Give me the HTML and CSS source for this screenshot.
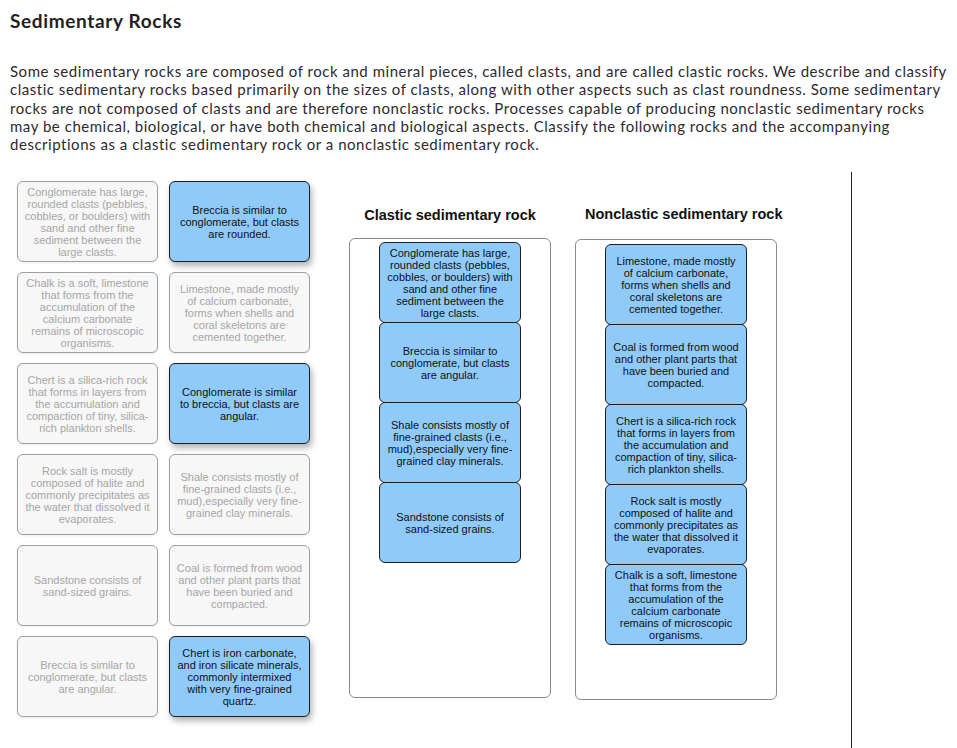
FILE: index.html
```html
<!DOCTYPE html>
<html lang="en">
<head>
<meta charset="utf-8">
<title>Sedimentary Rocks</title>
<link rel="stylesheet" href="styles.css">
</head>
<body>
<div class="page">
  <h1 class="title">Sedimentary Rocks</h1>
  <p class="intro">Some sedimentary rocks are composed of rock and mineral pieces, called clasts, and are called clastic rocks. We describe and classify<br>clastic sedimentary rocks based primarily on the sizes of clasts, along with other aspects such as clast roundness. Some sedimentary<br>rocks are not composed of clasts and are therefore nonclastic rocks. Processes capable of producing nonclastic sedimentary rocks<br>may be chemical, biological, or have both chemical and biological aspects. Classify the following rocks and the accompanying<br>descriptions as a clastic sedimentary rock or a nonclastic sedimentary rock.</p>
</div>

<div class="workspace">
  <div class="bank">
    <div class="card used">Conglomerate has large, rounded clasts (pebbles, cobbles, or boulders) with sand and other fine sediment between the large clasts.</div>
    <div class="card live">Breccia is similar to conglomerate, but clasts are rounded.</div>
    <div class="card used">Chalk is a soft, limestone that forms from the accumulation of the calcium carbonate remains of microscopic organisms.</div>
    <div class="card used">Limestone, made mostly of calcium carbonate, forms when shells and coral skeletons are cemented together.</div>
    <div class="card used">Chert is a silica-rich rock that forms in layers from the accumulation and compaction of tiny, silica-rich plankton shells.</div>
    <div class="card live">Conglomerate is similar to breccia, but clasts are angular.</div>
    <div class="card used">Rock salt is mostly composed of halite and commonly precipitates as the water that dissolved it evaporates.</div>
    <div class="card used">Shale consists mostly of fine-grained clasts (i.e., mud),especially very fine-grained clay minerals.</div>
    <div class="card used">Sandstone consists of sand-sized grains.</div>
    <div class="card used">Coal is formed from wood and other plant parts that have been buried and compacted.</div>
    <div class="card used">Breccia is similar to conglomerate, but clasts are angular.</div>
    <div class="card live">Chert is iron carbonate, and iron silicate minerals, commonly intermixed with very fine-grained quartz.</div>
  </div>

  <div class="targets">
    <div class="target first">
      <h2 class="target-title">Clastic sedimentary rock</h2>
      <div class="dropzone">
        <div class="card placed">Conglomerate has large, rounded clasts (pebbles, cobbles, or boulders) with sand and other fine sediment between the large clasts.</div>
        <div class="card placed">Breccia is similar to conglomerate, but clasts are angular.</div>
        <div class="card placed">Shale consists mostly of fine-grained clasts (i.e., mud),especially very fine-grained clay minerals.</div>
        <div class="card placed">Sandstone consists of sand-sized grains.</div>
      </div>
    </div>
    <div class="target second">
      <h2 class="target-title">Nonclastic sedimentary rock</h2>
      <div class="dropzone">
        <div class="card placed">Limestone, made mostly of calcium carbonate, forms when shells and coral skeletons are cemented together.</div>
        <div class="card placed">Coal is formed from wood and other plant parts that have been buried and compacted.</div>
        <div class="card placed">Chert is a silica-rich rock that forms in layers from the accumulation and compaction of tiny, silica-rich plankton shells.</div>
        <div class="card placed">Rock salt is mostly composed of halite and commonly precipitates as the water that dissolved it evaporates.</div>
        <div class="card placed">Chalk is a soft, limestone that forms from the accumulation of the calcium carbonate remains of microscopic organisms.</div>
      </div>
    </div>
  </div>
</div>
</body>
</html>
```

FILE: styles.css
```css
* {
  box-sizing: border-box;
}

body {
  margin: 0;
  background: #fff;
  color: #2b2b2b;
  font-family: "Lato", "Open Sans", sans-serif;
}

.page {
  padding: 8px 0 0 10px;
}

.title {
  margin: 0;
  font-size: 19px;
  line-height: 26px;
  font-weight: 700;
  letter-spacing: 0.65px;
  color: #222;
}

.intro {
  margin: 28px 0 0 0;
  font-size: 15px;
  line-height: 18.333px;
  letter-spacing: 0.53px;
  white-space: nowrap;
  color: #2e2a30;
}

/* drag and drop area */
.workspace {
  display: flex;
  align-items: flex-start;
  width: 852px;
  min-height: 580px;
  margin-top: 18px;
  padding: 9px 0 0 17px;
  border-right: 1px solid #222;
}

.bank {
  display: grid;
  grid-template-columns: 141px 141px;
  grid-auto-rows: 81px;
  column-gap: 11px;
  row-gap: 10px;
}

.card {
  display: flex;
  align-items: center;
  justify-content: center;
  text-align: center;
  padding: 1px 6.5px 0 6.5px;
  font-family: "Liberation Sans", Arial, sans-serif;
  font-size: 11px;
  line-height: 12px;
  border-radius: 6px;
}

.card.used {
  background: #f7f7f7;
  border: 1px solid #a0a0a0;
  color: #a6a6a6;
  box-shadow: 0 1px 3px rgba(0, 0, 0, 0.08);
}

.card.live {
  background: #90caf9;
  border: 1px solid #1e1e1e;
  color: #111;
  box-shadow: 2px 4px 6px rgba(0, 0, 0, 0.3);
}

.targets {
  display: flex;
  gap: 24px;
  margin-left: 39px;
}

.target {
  width: 202px;
}

.target-title {
  margin: 26px 0 15px 0;
  height: 16px;
  font-family: "Liberation Sans", Arial, sans-serif;
  font-size: 14.5px;
  line-height: 16px;
  font-weight: 700;
  text-align: center;
  color: #111;
  white-space: nowrap;
}

.second .target-title {
  padding-left: 10px;
  margin-top: 25px;
  margin-bottom: 17px;
}

.dropzone {
  display: flex;
  flex-direction: column;
  align-items: center;
  height: 461px;
  padding-top: 4px;
  border: 1px solid #8a8a8a;
  border-radius: 6px;
}

.first .dropzone {
  height: 460px;
  padding-top: 3px;
}

.card.placed {
  width: 142px;
  height: 81px;
  flex: none;
  background: #90caf9;
  border: 1px solid #1e1e1e;
  color: #111;
}

.card.placed + .card.placed {
  margin-top: -1px;
}
```
